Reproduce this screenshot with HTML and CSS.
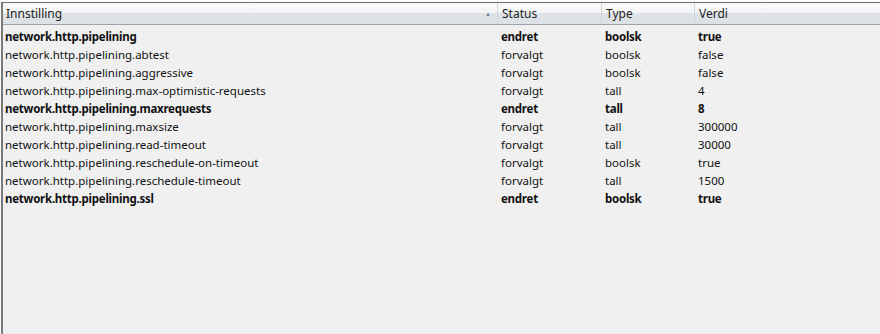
FILE: index.html
```html
<!DOCTYPE html>
<html lang="nb">
<head>
    <meta charset="UTF-8">
    <title>about:config</title>
    <link rel="stylesheet" href="styles.css">
</head>
<body>
    <div class="prefs">
        <div class="head row">
            <div class="cell">Innstilling<span class="sort">&#9650;</span></div>
            <div class="cell">Status</div>
            <div class="cell">Type</div>
            <div class="cell">Verdi</div>
        </div>
        <div class="list">
            <div class="row changed"><div class="cell">network.http.pipelining</div><div class="cell">endret</div><div class="cell">boolsk</div><div class="cell">true</div></div>
            <div class="row"><div class="cell">network.http.pipelining.abtest</div><div class="cell">forvalgt</div><div class="cell">boolsk</div><div class="cell">false</div></div>
            <div class="row"><div class="cell">network.http.pipelining.aggressive</div><div class="cell">forvalgt</div><div class="cell">boolsk</div><div class="cell">false</div></div>
            <div class="row"><div class="cell">network.http.pipelining.max-optimistic-requests</div><div class="cell">forvalgt</div><div class="cell">tall</div><div class="cell">4</div></div>
            <div class="row changed"><div class="cell">network.http.pipelining.maxrequests</div><div class="cell">endret</div><div class="cell">tall</div><div class="cell">8</div></div>
            <div class="row"><div class="cell">network.http.pipelining.maxsize</div><div class="cell">forvalgt</div><div class="cell">tall</div><div class="cell">300000</div></div>
            <div class="row"><div class="cell">network.http.pipelining.read-timeout</div><div class="cell">forvalgt</div><div class="cell">tall</div><div class="cell">30000</div></div>
            <div class="row"><div class="cell">network.http.pipelining.reschedule-on-timeout</div><div class="cell">forvalgt</div><div class="cell">boolsk</div><div class="cell">true</div></div>
            <div class="row"><div class="cell">network.http.pipelining.reschedule-timeout</div><div class="cell">forvalgt</div><div class="cell">tall</div><div class="cell">1500</div></div>
            <div class="row changed"><div class="cell">network.http.pipelining.ssl</div><div class="cell">endret</div><div class="cell">boolsk</div><div class="cell">true</div></div>
        </div>
    </div>
</body>
</html>
```

FILE: styles.css
```css
* {
    box-sizing: border-box;
    margin: 0;
    padding: 0;
}

body {
    font-family: "Noto Sans", "Open Sans", sans-serif;
    font-size: 11.5px;
    color: #111;
    background-color: #fbfbfb;
    padding-top: 2px;
}

/* Tree container */
.prefs {
    height: 332px;
    border-top: 1px solid #6d6d6d;
    border-left: 2px solid #7a7a7a;
    margin-left: 1px;
    background-color: #f0f0f0;
}

.row {
    display: grid;
    grid-template-columns: 494px 104px 93px 1fr;
    height: 18px;
    align-items: center;
}

.cell {
    padding-left: 4px;
    white-space: nowrap;
    overflow: hidden;
}

.row .cell:first-child {
    padding-left: 2px;
}

/* Column header */
.head {
    height: 22px;
    background: linear-gradient(#f9f9f9 0, #f3f4f5 45%, #dfe3e8 50%, #dce1e6 100%);
    border-bottom: 1px solid #9ea4ab;
    color: #222;
    font-size: 12px;
}

.head .cell {
    height: 100%;
    display: flex;
    align-items: center;
    padding-left: 4px;
    border-left: 1px solid #d3d6da;
}

.head .cell:first-child {
    border-left: none;
    padding-left: 3px;
    position: relative;
}

.sort {
    position: absolute;
    right: 6px;
    top: 7px;
    font-size: 6px;
    color: #7b8794;
}

.list {
    padding-top: 2px;
}

.changed {
    font-weight: bold;
    letter-spacing: -0.25px;
}
```
